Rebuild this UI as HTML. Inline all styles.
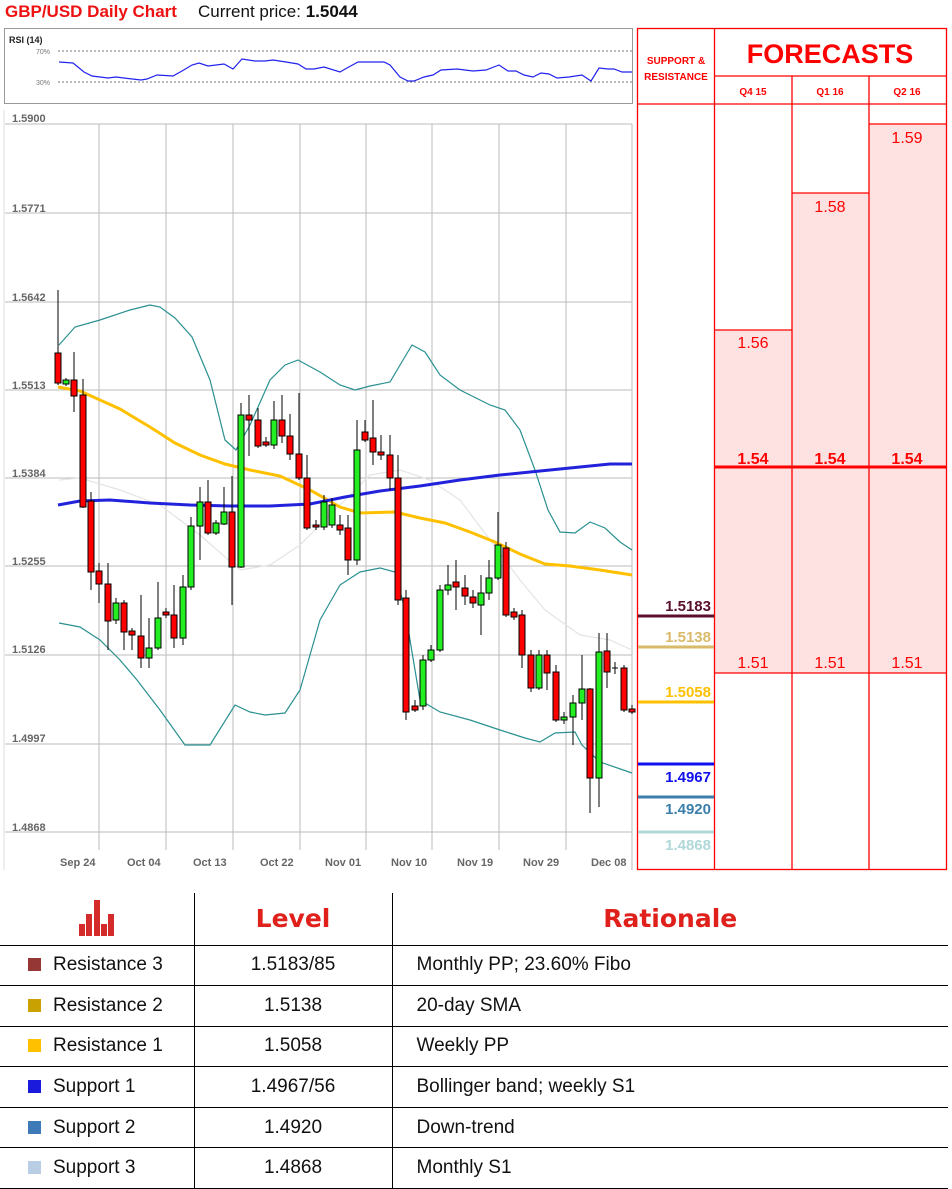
<!DOCTYPE html>
<html><head><meta charset="utf-8"><style>
*{margin:0;padding:0;box-sizing:border-box}
body{width:952px;height:1189px;overflow:hidden;background:#fff;font-family:"Liberation Sans",sans-serif;position:relative}
.a{position:absolute}
table{border-collapse:collapse;position:absolute;left:0;top:893px;width:948px}
td{border:1px solid #000;height:40.6px;font-size:19px;color:#111}
tr td:first-child{border-left:none}
tr td:last-child{border-right:none}
.sq{display:inline-block;width:13px;height:13px;margin:0 12px 0 28px;vertical-align:-1px}
.h{font-family:"DejaVu Sans","Liberation Sans",sans-serif;font-weight:900;font-size:25px;color:#e0201a;text-align:center;height:52px;border-top:none}
</style></head><body>
<div class="a" style="left:5px;top:2px;font-size:17px;font-weight:bold;color:#ee1111">GBP/USD Daily Chart</div>
<div class="a" style="left:198px;top:2px;font-size:17px;color:#111">Current price: <b>1.5044</b></div>

<svg class="a" style="left:0;top:0" width="952" height="893">
<rect x="4.5" y="28.5" width="628" height="75" fill="#fff" stroke="#999"/>
<text x="9" y="43" font-size="9" font-weight="bold" fill="#222" font-family="Liberation Sans">RSI (14)</text>
<line x1="58" y1="51" x2="632" y2="51" stroke="#777" stroke-dasharray="2,2"/>
<line x1="58" y1="82" x2="632" y2="82" stroke="#777" stroke-dasharray="2,2"/>
<text x="36" y="54" font-size="7" fill="#777" font-family="Liberation Sans">70%</text>
<text x="36" y="85" font-size="7" fill="#777" font-family="Liberation Sans">30%</text>
<polyline fill="none" stroke="#2222ee" stroke-width="1.2" points="59,62 73,63 84,72 92,76 100,77 108,78 116,77 124,78 141,80 147,79 157,75 173,76 182,71 192,65 199,63 208,66 224,64 233,69 242,59 255,61 265,61 273,60 286,62 298,64 306,69 314,69 324,67 340,72 347,68 358,62 367,62 376,62 384,62 390,65 400,77 408,81 414,81 424,77 433,75 441,70 457,69 473,71 486,70 499,65 508,71 516,71 524,75 533,77 541,73 549,74 557,78 569,77 582,75 591,81 599,68 608,69 614,69 622,72 632,72"/>
<g stroke="#bbb" stroke-width="1">
<line x1="5" y1="124" x2="632" y2="124"/><line x1="5" y1="213" x2="632" y2="213"/><line x1="5" y1="302" x2="632" y2="302"/><line x1="5" y1="390" x2="632" y2="390"/><line x1="5" y1="478" x2="632" y2="478"/><line x1="5" y1="566" x2="632" y2="566"/><line x1="5" y1="655" x2="632" y2="655"/><line x1="5" y1="744" x2="632" y2="744"/><line x1="5" y1="832" x2="632" y2="832"/>
<line x1="99" y1="124" x2="99" y2="850"/><line x1="166" y1="124" x2="166" y2="850"/><line x1="233" y1="124" x2="233" y2="850"/><line x1="300" y1="124" x2="300" y2="850"/><line x1="366" y1="124" x2="366" y2="850"/><line x1="432" y1="124" x2="432" y2="850"/><line x1="499" y1="124" x2="499" y2="850"/><line x1="566" y1="124" x2="566" y2="850"/><line x1="632" y1="124" x2="632" y2="870"/>
</g>
<line x1="4" y1="110" x2="4" y2="870" stroke="#ddd"/>
<g font-size="11" fill="#666" font-weight="bold" font-family="Liberation Sans">
<text x="12" y="122">1.5900</text><text x="12" y="212">1.5771</text><text x="12" y="301">1.5642</text><text x="12" y="389">1.5513</text><text x="12" y="477">1.5384</text><text x="12" y="565">1.5255</text><text x="12" y="653">1.5126</text><text x="12" y="742">1.4997</text><text x="12" y="831">1.4868</text>
<text x="60" y="866">Sep 24</text><text x="127" y="866">Oct 04</text><text x="193" y="866">Oct 13</text><text x="260" y="866">Oct 22</text><text x="325" y="866">Nov 01</text><text x="391" y="866">Nov 10</text><text x="457" y="866">Nov 19</text><text x="523" y="866">Nov 29</text><text x="591" y="866">Dec 08</text>
</g>
<polyline fill="none" stroke="#e4e4e4" stroke-width="1.2" points="59,480 80,478 120,490 160,505 200,535 240,570 270,565 300,545 340,505 370,475 400,470 430,480 460,500 490,540 520,580 545,610 580,635 610,640 632,650"/>
<polyline fill="none" stroke="#2a9090" stroke-width="1.2" points="59,345 75,327 100,320 130,310 150,305 160,307 175,318 192,337 210,380 225,440 236,450 250,425 270,380 285,365 298,360 320,372 340,385 355,390 370,386 390,382 403,360 412,345 425,352 440,375 460,390 490,405 505,410 520,430 535,470 548,510 560,532 575,533 590,522 605,528 620,542 632,550"/>
<polyline fill="none" stroke="#2a9090" stroke-width="1.2" points="59,623 80,627 100,640 120,660 137,680 160,710 185,745 210,745 235,705 250,712 265,715 285,713 300,690 320,620 340,585 360,572 380,568 395,572 405,610 420,700 440,712 470,720 500,730 525,738 540,742 555,733 575,732 582,745 600,762 632,773"/>
<polyline fill="none" stroke="#ffc000" stroke-width="3" points="58,387 80,391 100,400 120,409 150,427 175,443 200,455 225,464 250,470 280,476 310,490 340,507 360,513 395,512 420,518 445,523 470,532 495,542 520,554 545,564 570,566 600,570 632,575"/>
<polyline fill="none" stroke="#2222dd" stroke-width="3" points="58,505 80,501 110,500 150,503 190,505 230,506 270,506 310,504 345,497 380,491 420,486 460,480 500,475 540,471 580,467 610,464 632,464"/>
<g stroke="#000" stroke-width="1">
<line x1="58" y1="290" x2="58" y2="385"/><rect x="55" y="353" width="6" height="30" fill="#f00"/>
<line x1="66" y1="378" x2="66" y2="386"/><rect x="63" y="380" width="6" height="4" fill="#2e2"/>
<line x1="74" y1="352" x2="74" y2="412"/><rect x="71" y="380" width="6" height="16" fill="#f00"/>
<line x1="83" y1="379" x2="83" y2="508"/><rect x="80" y="395" width="6" height="112" fill="#f00"/>
<line x1="91" y1="492" x2="91" y2="590"/><rect x="88" y="501" width="6" height="71" fill="#f00"/>
<line x1="99" y1="563" x2="99" y2="603"/><rect x="96" y="571" width="6" height="13" fill="#f00"/>
<line x1="108" y1="563" x2="108" y2="650"/><rect x="105" y="584" width="6" height="37" fill="#f00"/>
<line x1="116" y1="598" x2="116" y2="624"/><rect x="113" y="603" width="6" height="17" fill="#2e2"/>
<line x1="124" y1="600" x2="124" y2="650"/><rect x="121" y="603" width="6" height="29" fill="#f00"/>
<line x1="132" y1="628" x2="132" y2="650"/><rect x="129" y="631" width="6" height="4" fill="#f00"/>
<line x1="141" y1="595" x2="141" y2="668"/><rect x="138" y="636" width="6" height="22" fill="#f00"/>
<line x1="149" y1="618" x2="149" y2="668"/><rect x="146" y="648" width="6" height="10" fill="#2e2"/>
<line x1="158" y1="582" x2="158" y2="650"/><rect x="155" y="618" width="6" height="30" fill="#2e2"/>
<line x1="166" y1="608" x2="166" y2="618"/><rect x="163" y="612" width="6" height="3" fill="#f00"/>
<line x1="174" y1="585" x2="174" y2="648"/><rect x="171" y="615" width="6" height="23" fill="#f00"/>
<line x1="183" y1="575" x2="183" y2="645"/><rect x="180" y="587" width="6" height="51" fill="#2e2"/>
<line x1="191" y1="517" x2="191" y2="590"/><rect x="188" y="526" width="6" height="61" fill="#2e2"/>
<line x1="200" y1="487" x2="200" y2="560"/><rect x="197" y="502" width="6" height="24" fill="#2e2"/>
<line x1="208" y1="480" x2="208" y2="535"/><rect x="205" y="502" width="6" height="31" fill="#f00"/>
<line x1="216" y1="520" x2="216" y2="535"/><rect x="213" y="523" width="6" height="10" fill="#2e2"/>
<line x1="224" y1="487" x2="224" y2="525"/><rect x="221" y="512" width="6" height="12" fill="#2e2"/>
<line x1="232" y1="476" x2="232" y2="605"/><rect x="229" y="512" width="6" height="55" fill="#f00"/>
<line x1="241" y1="403" x2="241" y2="568"/><rect x="238" y="415" width="6" height="152" fill="#2e2"/>
<line x1="249" y1="395" x2="249" y2="456"/><rect x="246" y="415" width="6" height="5" fill="#f00"/>
<line x1="258" y1="408" x2="258" y2="448"/><rect x="255" y="420" width="6" height="26" fill="#f00"/>
<line x1="266" y1="437" x2="266" y2="447"/><rect x="263" y="442" width="6" height="3" fill="#f00"/>
<line x1="274" y1="401" x2="274" y2="449"/><rect x="271" y="420" width="6" height="25" fill="#2e2"/>
<line x1="282" y1="395" x2="282" y2="443"/><rect x="279" y="420" width="6" height="16" fill="#f00"/>
<line x1="290" y1="414" x2="290" y2="460"/><rect x="287" y="436" width="6" height="18" fill="#f00"/>
<line x1="299" y1="393" x2="299" y2="480"/><rect x="296" y="454" width="6" height="24" fill="#f00"/>
<line x1="307" y1="455" x2="307" y2="530"/><rect x="304" y="478" width="6" height="50" fill="#f00"/>
<line x1="316" y1="520" x2="316" y2="530"/><rect x="313" y="525" width="6" height="2" fill="#f00"/>
<line x1="324" y1="495" x2="324" y2="530"/><rect x="321" y="502" width="6" height="25" fill="#2e2"/>
<line x1="332" y1="498" x2="332" y2="528"/><rect x="329" y="505" width="6" height="20" fill="#2e2"/>
<line x1="340" y1="515" x2="340" y2="535"/><rect x="337" y="525" width="6" height="5" fill="#f00"/>
<line x1="348" y1="515" x2="348" y2="575"/><rect x="345" y="528" width="6" height="32" fill="#f00"/>
<line x1="357" y1="420" x2="357" y2="565"/><rect x="354" y="450" width="6" height="110" fill="#2e2"/>
<line x1="365" y1="420" x2="365" y2="442"/><rect x="362" y="432" width="6" height="8" fill="#f00"/>
<line x1="373" y1="400" x2="373" y2="465"/><rect x="370" y="438" width="6" height="14" fill="#f00"/>
<line x1="381" y1="435" x2="381" y2="460"/><rect x="378" y="452" width="6" height="3" fill="#f00"/>
<line x1="390" y1="435" x2="390" y2="490"/><rect x="387" y="455" width="6" height="23" fill="#f00"/>
<line x1="398" y1="455" x2="398" y2="605"/><rect x="395" y="478" width="6" height="122" fill="#f00"/>
<line x1="406" y1="590" x2="406" y2="720"/><rect x="403" y="598" width="6" height="114" fill="#f00"/>
<line x1="415" y1="700" x2="415" y2="712"/><rect x="412" y="706" width="6" height="4" fill="#f00"/>
<line x1="423" y1="655" x2="423" y2="710"/><rect x="420" y="660" width="6" height="46" fill="#2e2"/>
<line x1="431" y1="645" x2="431" y2="662"/><rect x="428" y="650" width="6" height="10" fill="#2e2"/>
<line x1="440" y1="585" x2="440" y2="652"/><rect x="437" y="590" width="6" height="60" fill="#2e2"/>
<line x1="448" y1="565" x2="448" y2="595"/><rect x="445" y="585" width="6" height="5" fill="#2e2"/>
<line x1="456" y1="560" x2="456" y2="610"/><rect x="453" y="582" width="6" height="5" fill="#f00"/>
<line x1="465" y1="575" x2="465" y2="605"/><rect x="462" y="588" width="6" height="8" fill="#f00"/>
<line x1="473" y1="590" x2="473" y2="608"/><rect x="470" y="597" width="6" height="6" fill="#f00"/>
<line x1="481" y1="575" x2="481" y2="635"/><rect x="478" y="593" width="6" height="12" fill="#2e2"/>
<line x1="489" y1="560" x2="489" y2="600"/><rect x="486" y="578" width="6" height="15" fill="#2e2"/>
<line x1="498" y1="512" x2="498" y2="580"/><rect x="495" y="545" width="6" height="33" fill="#2e2"/>
<line x1="506" y1="542" x2="506" y2="617"/><rect x="503" y="548" width="6" height="67" fill="#f00"/>
<line x1="514" y1="608" x2="514" y2="620"/><rect x="511" y="612" width="6" height="5" fill="#f00"/>
<line x1="522" y1="610" x2="522" y2="668"/><rect x="519" y="615" width="6" height="40" fill="#f00"/>
<line x1="531" y1="650" x2="531" y2="692"/><rect x="528" y="655" width="6" height="33" fill="#f00"/>
<line x1="539" y1="650" x2="539" y2="690"/><rect x="536" y="655" width="6" height="33" fill="#2e2"/>
<line x1="547" y1="650" x2="547" y2="690"/><rect x="544" y="655" width="6" height="18" fill="#f00"/>
<line x1="556" y1="665" x2="556" y2="722"/><rect x="553" y="672" width="6" height="48" fill="#f00"/>
<line x1="564" y1="712" x2="564" y2="724"/><rect x="561" y="717" width="6" height="3" fill="#2e2"/>
<line x1="573" y1="695" x2="573" y2="745"/><rect x="570" y="703" width="6" height="14" fill="#2e2"/>
<line x1="582" y1="655" x2="582" y2="720"/><rect x="579" y="689" width="6" height="14" fill="#2e2"/>
<line x1="590" y1="688" x2="590" y2="813"/><rect x="587" y="689" width="6" height="89" fill="#f00"/>
<line x1="599" y1="633" x2="599" y2="807"/><rect x="596" y="652" width="6" height="126" fill="#2e2"/>
<line x1="607" y1="633" x2="607" y2="688"/><rect x="604" y="651" width="6" height="21" fill="#f00"/>
<line x1="615" y1="662" x2="615" y2="674"/><line x1="612" y1="668" x2="618" y2="668"/>
<line x1="624" y1="665" x2="624" y2="712"/><rect x="621" y="668" width="6" height="42" fill="#f00"/>
<line x1="632" y1="705" x2="632" y2="714"/><rect x="629" y="709" width="6" height="3" fill="#f00"/>
</g>
<rect x="715" y="330" width="77" height="343" fill="#fee2e2"/>
<rect x="792" y="193" width="77" height="480" fill="#fee2e2"/>
<rect x="869" y="124" width="77" height="549" fill="#fee2e2"/>
<g stroke="#f00" stroke-width="1.3" fill="none">
<rect x="637.5" y="28.5" width="309" height="841"/>
<line x1="714.5" y1="28" x2="714.5" y2="870"/>
<line x1="792" y1="76" x2="792" y2="870"/>
<line x1="869" y1="76" x2="869" y2="870"/>
<line x1="714" y1="76" x2="946" y2="76"/>
<line x1="637" y1="104" x2="946" y2="104"/>
<line x1="714" y1="330" x2="792" y2="330"/>
<line x1="792" y1="193" x2="869" y2="193"/>
<line x1="869" y1="124" x2="946" y2="124"/>
<line x1="714" y1="673" x2="946" y2="673"/>
<line x1="714" y1="467" x2="946" y2="467" stroke-width="3"/>
</g>
<g fill="#f00" font-family="Liberation Sans" text-anchor="middle">
<text x="676" y="64" font-size="10" font-weight="bold">SUPPORT &amp;</text>
<text x="676" y="80" font-size="10" font-weight="bold">RESISTANCE</text>
<text x="830" y="63" font-size="27" font-weight="bold">FORECASTS</text>
<text x="753" y="95" font-size="10" font-weight="bold">Q4 15</text>
<text x="830" y="95" font-size="10" font-weight="bold">Q1 16</text>
<text x="907" y="95" font-size="10" font-weight="bold">Q2 16</text>
<g font-size="16"><text x="753" y="348">1.56</text><text x="830" y="212">1.58</text><text x="907" y="143">1.59</text>
<text x="753" y="668">1.51</text><text x="830" y="668">1.51</text><text x="907" y="668">1.51</text></g>
<g font-size="16" font-weight="bold"><text x="753" y="464">1.54</text><text x="830" y="464">1.54</text><text x="907" y="464">1.54</text></g>
</g>
<g font-family="Liberation Sans" font-size="15" font-weight="bold" text-anchor="end">
<line x1="638" y1="616" x2="714" y2="616" stroke="#5a0f2e" stroke-width="3"/><text x="711" y="611" fill="#5a0f2e">1.5183</text>
<line x1="638" y1="647" x2="714" y2="647" stroke="#d9b96a" stroke-width="3"/><text x="711" y="642" fill="#d9b96a">1.5138</text>
<line x1="638" y1="702" x2="714" y2="702" stroke="#ffc000" stroke-width="3"/><text x="711" y="697" fill="#ffc000">1.5058</text>
<line x1="638" y1="764" x2="714" y2="764" stroke="#1010ee" stroke-width="3"/><text x="711" y="782" fill="#1010ee">1.4967</text>
<line x1="638" y1="797" x2="714" y2="797" stroke="#3a7fab" stroke-width="3"/><text x="711" y="814" fill="#3a7fab">1.4920</text>
<line x1="638" y1="832" x2="714" y2="832" stroke="#b0d8d8" stroke-width="3"/><text x="711" y="850" fill="#b0d8d8">1.4868</text>
</g>
</svg>

<table>
<tr><td class="h" style="width:194px"><svg width="36" height="38" style="vertical-align:middle"><g fill="#d42a2a"><rect x="0" y="24" width="6" height="12"/><rect x="7" y="14" width="6" height="22"/><rect x="15" y="0" width="6" height="36"/><rect x="22" y="24" width="6" height="12"/><rect x="29" y="14" width="6" height="22"/></g></svg></td>
<td class="h" style="width:198px">Level</td><td class="h">Rationale</td></tr>
<tr><td><span class="sq" style="background:#953735"></span>Resistance 3</td><td style="text-align:center">1.5183/85</td><td style="padding-left:24px">Monthly PP; 23.60% Fibo</td></tr>
<tr><td><span class="sq" style="background:#c9a100"></span>Resistance 2</td><td style="text-align:center">1.5138</td><td style="padding-left:24px">20-day SMA</td></tr>
<tr><td><span class="sq" style="background:#ffc000"></span>Resistance 1</td><td style="text-align:center">1.5058</td><td style="padding-left:24px">Weekly PP</td></tr>
<tr><td><span class="sq" style="background:#1a1add"></span>Support 1</td><td style="text-align:center">1.4967/56</td><td style="padding-left:24px">Bollinger band; weekly S1</td></tr>
<tr><td><span class="sq" style="background:#3f7ab8"></span>Support 2</td><td style="text-align:center">1.4920</td><td style="padding-left:24px">Down-trend</td></tr>
<tr><td><span class="sq" style="background:#b9cde5"></span>Support 3</td><td style="text-align:center">1.4868</td><td style="padding-left:24px">Monthly S1</td></tr>
</table>
</body></html>
